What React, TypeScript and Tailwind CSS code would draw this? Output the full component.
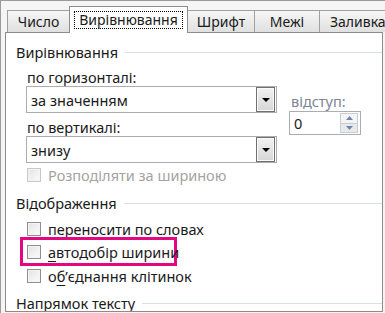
import { ReactNode } from "react";

const font = { fontFamily: '"Noto Sans", "Open Sans", sans-serif' };

function Tab({ label, active, w }: { label: string; active?: boolean; w: string }) {
  if (active) {
    return (
      <div className={`relative z-10 -mb-px -ml-px flex h-[27px] ${w} shrink-0 items-start justify-center border border-b-0 border-[#8c8c8c] bg-white pt-[4px]`}>
        <span className="whitespace-nowrap border border-dotted border-black px-[4px] leading-[16px]">{label}</span>
      </div>
    );
  }
  return (
    <div className={`-ml-px flex h-[22px] ${w} shrink-0 items-center justify-center border border-b-0 border-[#a0a0a0] bg-gradient-to-b from-[#f6f6f6] to-[#e0e0e0] pt-[1px] first:ml-0`}>
      <span className="whitespace-nowrap leading-none">{label}</span>
    </div>
  );
}

function Section({ title, children }: { title: string; children?: ReactNode }) {
  return (
    <div>
      <div className="flex h-[20px] items-center gap-[7px] pl-[10px]">
        <span className="whitespace-nowrap leading-[20px]">{title}</span>
        <div className="h-px flex-1 bg-[#d8e0e6]" />
      </div>
      {children}
    </div>
  );
}

function Select({ value }: { value: string }) {
  return (
    <div className="flex h-[27px] w-[251px] items-center border border-[#abadb3] bg-white pl-[4px]">
      <span className="flex-1 whitespace-nowrap leading-[20px]">{value}</span>
      <div className="mr-[1px] flex h-[25px] w-[19px] items-center justify-center border border-[#707070] bg-gradient-to-b from-[#f2f2f2] to-[#d6d6d6] shadow-[inset_0_0_0_1px_#fafafa]">
        <svg width="8" height="4" viewBox="0 0 8 4">
          <path d="M0 0h8L4 4z" fill="#000" />
        </svg>
      </div>
    </div>
  );
}

function Check({ children, disabled }: { children: ReactNode; disabled?: boolean }) {
  return (
    <div className="flex h-[20px] items-center gap-[7px]">
      <div className={`h-[14px] w-[14px] shrink-0 border ${disabled ? "border-[#c8c8c8]" : "border-[#8e8f8f]"} bg-gradient-to-br from-[#e4e4e4] to-[#fbfbfb] shadow-[inset_0_0_0_1px_#f4f4f4]`} />
      <span className={`whitespace-nowrap leading-[20px] ${disabled ? "text-[#a3a3a3]" : ""}`}>{children}</span>
    </div>
  );
}

function U({ children }: { children: ReactNode }) {
  return <span className="underline underline-offset-[3px]">{children}</span>;
}

export default function App() {
  return (
    <div className="h-[313px] w-[385px] overflow-hidden border-l border-t border-[#9a9a9a] bg-[#f5f5f5] text-[14.5px] text-[#1a1a1a]" style={font}>
      <div className="flex h-[31px] items-end pl-[6px] text-[14px]">
        <Tab label="Число" w="w-[63px]" />
        <Tab label="Вирівнювання" active w="w-[119px]" />
        <Tab label="Шрифт" w="w-[68px]" />
        <Tab label="Межі" w="w-[66px]" />
        <div className="-ml-px flex h-[22px] w-[70px] shrink-0 items-center border border-b-0 border-[#a0a0a0] bg-gradient-to-b from-[#f6f6f6] to-[#e0e0e0] pl-[10px] pt-[1px]">
          <span className="whitespace-nowrap leading-none">Заливка</span>
        </div>
      </div>
      <div className="ml-[4px] h-[280px] w-[378px] overflow-hidden border border-[#8c8c8c] bg-white pt-[9px]">
        <Section title="Вирівнювання">
          <div className="flex pl-[20px] pt-[7px]">
            <div className="flex flex-col">
              <span className="whitespace-nowrap pl-[1px] leading-[16px]">
                по горизо<U>н</U>талі:
              </span>
              <div className="mt-[1px]">
                <Select value="за значенням" />
              </div>
              <span className="mt-[6px] whitespace-nowrap pl-[1px] leading-[16px]">
                по в<U>е</U>ртикалі:
              </span>
              <div className="mt-[1px]">
                <Select value="знизу" />
              </div>
              <div className="mt-[2px] pl-[1px]">
                <Check disabled>Розподіляти за шириною</Check>
              </div>
            </div>
            <div className="ml-[12px] flex flex-col pt-[24px]">
              <span className="whitespace-nowrap pl-[2px] leading-[16px] text-[#7b8594]">відступ:</span>
              <div className="mt-[2px] flex h-[24px] w-[72px] items-center border border-[#abadb3] bg-white pl-[4px]">
                <span className="flex-1 leading-[20px]">0</span>
                <div className="mr-[2px] flex h-[20px] w-[18px] flex-col border border-[#c9cdd3]">
                  <div className="flex flex-1 items-center justify-center border-b border-[#c9cdd3] bg-[#f4f4f4]">
                    <svg width="7" height="4" viewBox="0 0 7 4"><path d="M0 4h7L3.5 0z" fill="#6e86a9" /></svg>
                  </div>
                  <div className="flex flex-1 items-center justify-center bg-[#e9e9e9]">
                    <svg width="7" height="4" viewBox="0 0 7 4"><path d="M0 0h7L3.5 4z" fill="#6e86a9" /></svg>
                  </div>
                </div>
              </div>
            </div>
          </div>
        </Section>
        <div className="mt-[8px]">
          <Section title="Відображення">
            <div className="flex flex-col pl-[21px] pt-[6px]">
              <Check>
                <U>п</U>ереносити по словах
              </Check>
              <div className="-ml-[7px] -mt-[2px] w-[157px] border-[3px] border-[#e3087f] pb-[1px] pl-[4px] pt-[2px]">
                <Check>
                  <U>а</U>втодобір ширини
                </Check>
              </div>
              <Check>
                о<U>б</U>’єднання клітинок
              </Check>
            </div>
          </Section>
        </div>
        <div className="mt-[7px]">
          <Section title="Напрямок тексту" />
        </div>
      </div>
    </div>
  );
}
